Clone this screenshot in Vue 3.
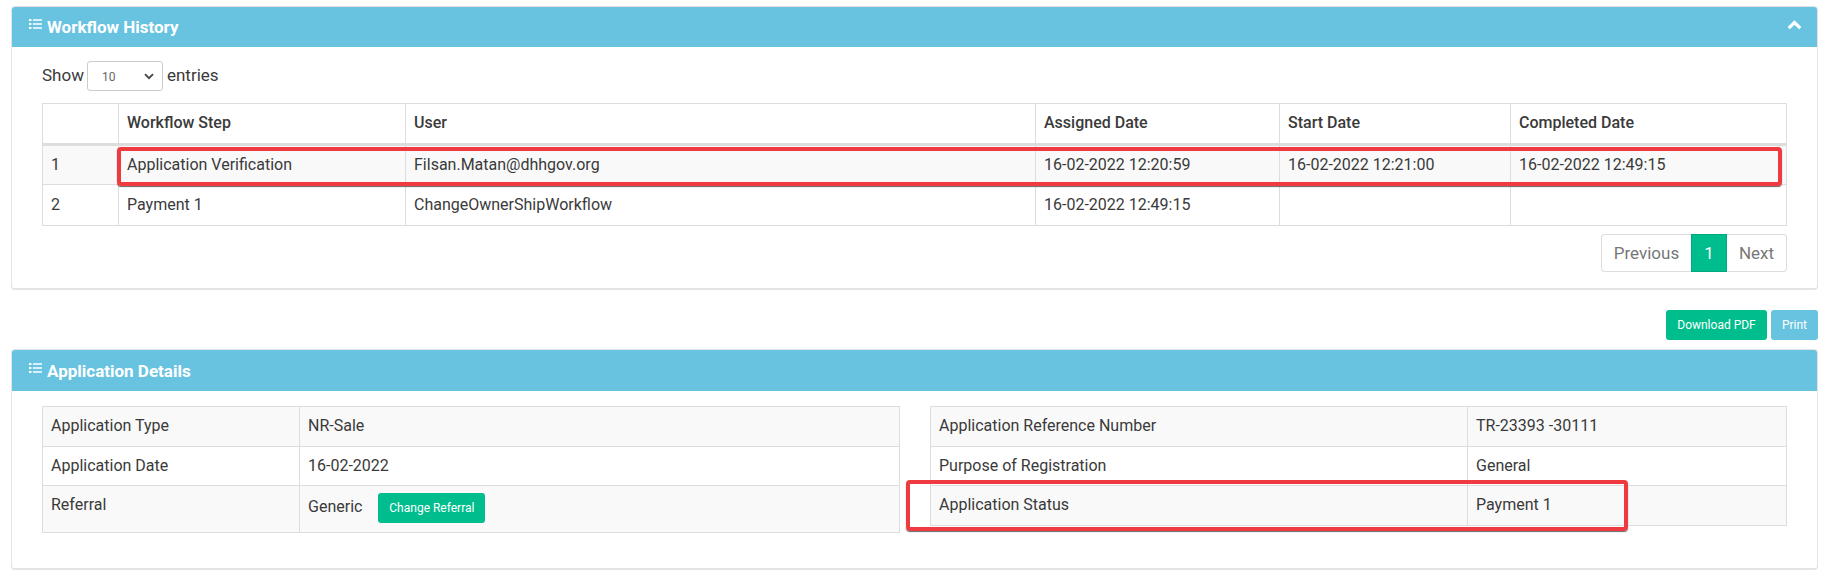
<script setup>
const history = [
  { n: '1', step: 'Application Verification', user: 'Filsan.Matan@dhhgov.org', assigned: '16-02-2022 12:20:59', start: '16-02-2022 12:21:00', done: '16-02-2022 12:49:15' },
  { n: '2', step: 'Payment 1', user: 'ChangeOwnerShipWorkflow', assigned: '16-02-2022 12:49:15', start: '', done: '' }
]
</script>

<template>
  <div class="page">
    <section class="card">
      <header class="card-head">
        <h2 class="title">
          <svg class="list-icon" viewBox="0 0 14 12" aria-hidden="true">
            <path d="M0 0.5h2.6v2.4H0zM0 4.8h2.6v2.4H0zM0 9.1h2.6v2.4H0zM4.2 0.8H14v1.8H4.2zM4.2 5.1H14v1.8H4.2zM4.2 9.4H14v1.8H4.2z" fill="#fff" />
          </svg>
          Workflow History
        </h2>
        <svg class="chevron" viewBox="0 0 14 9" aria-hidden="true">
          <path d="M1.6 7.4 7 2.2l5.4 5.2" fill="none" stroke="#fff" stroke-width="3" />
        </svg>
      </header>
      <div class="history-body">
        <div class="length">
          <span>Show</span>
          <span class="select-wrap">
            <select class="length-select">
              <option>10</option>
            </select>
            <svg class="select-arrow" viewBox="0 0 10 7" aria-hidden="true">
              <path d="M1 1.2 5 5.2l4-4" fill="none" stroke="#444" stroke-width="1.8" />
            </svg>
          </span>
          <span>entries</span>
        </div>
        <div class="table-wrap">
          <table class="grid history">
            <colgroup>
              <col class="c1" /><col class="c2" /><col class="c3" /><col class="c4" /><col class="c5" /><col />
            </colgroup>
            <thead>
              <tr>
                <th></th>
                <th>Workflow Step</th>
                <th>User</th>
                <th>Assigned Date</th>
                <th>Start Date</th>
                <th>Completed Date</th>
              </tr>
            </thead>
            <tbody>
              <tr v-for="row in history" :key="row.n">
                <td>{{ row.n }}</td>
                <td>{{ row.step }}</td>
                <td>{{ row.user }}</td>
                <td>{{ row.assigned }}</td>
                <td>{{ row.start }}</td>
                <td>{{ row.done }}</td>
              </tr>
            </tbody>
          </table>
          <div class="mark mark-history"></div>
        </div>
        <nav class="pager">
          <span class="page-btn prev">Previous</span>
          <span class="page-btn active">1</span>
          <span class="page-btn next">Next</span>
        </nav>
      </div>
    </section>

    <div class="actions">
      <button class="btn green download">Download PDF</button>
      <button class="btn blue print">Print</button>
    </div>

    <section class="card">
      <header class="card-head second">
        <h2 class="title">
          <svg class="list-icon" viewBox="0 0 14 12" aria-hidden="true">
            <path d="M0 0.5h2.6v2.4H0zM0 4.8h2.6v2.4H0zM0 9.1h2.6v2.4H0zM4.2 0.8H14v1.8H4.2zM4.2 5.1H14v1.8H4.2zM4.2 9.4H14v1.8H4.2z" fill="#fff" />
          </svg>
          Application Details
        </h2>
      </header>
      <div class="details">
        <table class="grid info left">
          <colgroup><col class="l1" /><col /></colgroup>
          <tbody>
            <tr class="r1"><td>Application Type</td><td>NR-Sale</td></tr>
            <tr class="r2"><td>Application Date</td><td>16-02-2022</td></tr>
            <tr class="r3">
              <td class="top">Referral</td>
              <td class="referral">
                <span>Generic</span>
                <button class="btn green change">Change Referral</button>
              </td>
            </tr>
          </tbody>
        </table>
        <div class="table-wrap">
          <table class="grid info right">
            <colgroup><col class="r-col" /><col /></colgroup>
            <tbody>
              <tr class="r1"><td>Application Reference Number</td><td>TR-23393 -30111</td></tr>
              <tr class="r2"><td>Purpose of Registration</td><td>General</td></tr>
              <tr class="r1"><td>Application Status</td><td>Payment 1</td></tr>
            </tbody>
          </table>
          <div class="mark mark-status"></div>
        </div>
      </div>
    </section>
  </div>
</template>

<style scoped>
.page {
  box-sizing: border-box;
  width: 1829px;
  height: 579px;
  padding: 6px 11px 0 11px;
  overflow: hidden;
  background: #fff;
  font-family: Roboto, "Liberation Sans", sans-serif;
  font-size: 16px;
  color: #3a3a3a;
}
.card {
  border: 1px solid #e4e4e4;
  border-bottom-width: 2px;
  border-radius: 4px;
  background: #fff;
}
.card-head {
  display: flex;
  align-items: center;
  justify-content: space-between;
  height: 40px;
  padding: 0 15px;
  background: #67c3e0;
  border-radius: 3px 3px 0 0;
}
.card-head.second {
  height: 41px;
}
.title {
  display: flex;
  align-items: center;
  margin: 0;
  font-size: 17px;
  line-height: 22px;
  font-weight: 700;
  color: #fff;
}
.list-icon {
  width: 13px;
  height: 12px;
  margin: -6px 5px 0 2px;
}
.chevron {
  width: 15px;
  height: 10px;
  margin: -4px 0 0 0;
}
.history-body {
  padding: 14px 30px 16px;
}
.length {
  display: flex;
  align-items: center;
  gap: 3px;
  height: 30px;
  margin-bottom: 12px;
  font-size: 17px;
  line-height: 24px;
}
.length > span:first-child,
.length > span:last-child {
  padding-bottom: 3px;
}
.select-wrap {
  position: relative;
  display: block;
  height: 30px;
  margin: 0 1px 0 0;
}
.length-select {
  box-sizing: border-box;
  display: block;
  width: 76px;
  height: 30px;
  padding: 2px 8px 0 14px;
  border: 1px solid #ccc;
  border-radius: 3px;
  background: #fff;
  appearance: none;
  font-family: inherit;
  font-size: 12px;
  color: #666;
}
.select-arrow {
  position: absolute;
  right: 9px;
  top: 12px;
  width: 10px;
  height: 7px;
  pointer-events: none;
}
.table-wrap {
  position: relative;
}
.grid {
  width: 100%;
  border-collapse: collapse;
  table-layout: fixed;
}
.grid th,
.grid td {
  box-sizing: border-box;
  padding: 0 8px 2px;
  border: 1px solid #ddd;
  text-align: left;
  white-space: nowrap;
}
.history th {
  height: 41px;
  border-bottom: 3px solid #ddd;
  font-weight: 500;
}
.history td {
  height: 40px;
}
.history tbody tr:last-child td {
  height: 41px;
}
.history tbody tr:first-child {
  background: #f9f9f9;
}
.c1 { width: 76px; }
.c2 { width: 287px; }
.c3 { width: 630px; }
.c4 { width: 244px; }
.c5 { width: 231px; }
.mark {
  position: absolute;
  box-sizing: border-box;
  border: 4px solid #ef3b3f;
  border-radius: 4px;
  box-shadow: 0 1px 1px #666;
  pointer-events: none;
}
.mark-history {
  left: 75px;
  top: 44px;
  width: 1665px;
  height: 39px;
}
.mark-status {
  left: -24px;
  top: 74px;
  width: 722px;
  height: 51px;
}
.pager {
  display: flex;
  justify-content: flex-end;
  margin-top: 8px;
  height: 38px;
  font-size: 17px;
}
.page-btn {
  box-sizing: border-box;
  display: flex;
  align-items: center;
  justify-content: center;
  height: 38px;
  border: 1px solid #ddd;
  color: #777;
}
.prev {
  width: 90px;
  border-radius: 4px 0 0 4px;
  border-right: 0;
}
.active {
  width: 36px;
  background: #00bd8d;
  border-color: #00a87d;
  color: #fff;
}
.next {
  width: 60px;
  border-left: 0;
  border-radius: 0 4px 4px 0;
}
.actions {
  display: flex;
  justify-content: flex-end;
  gap: 4px;
  margin: 20px 0 9px;
}
.btn {
  box-sizing: border-box;
  height: 30px;
  padding: 0;
  border: 0;
  border-radius: 3px;
  font-family: inherit;
  font-size: 12px;
  color: #fff;
}
.green {
  background: #00bd8d;
}
.blue {
  background: #67c3e0;
}
.download {
  width: 101px;
}
.print {
  width: 47px;
}
.details {
  display: grid;
  grid-template-columns: 858px 857px;
  column-gap: 30px;
  align-items: start;
  padding: 15px 30px 35px;
}
.info .r1 td {
  height: 40px;
  background: #f9f9f9;
}
.info .r2 td {
  height: 39px;
}
.info .r3 td {
  height: 47px;
  background: #f9f9f9;
}
.l1 {
  width: 257px;
}
.r-col {
  width: 537px;
}
.grid td.top {
  vertical-align: top;
  padding-top: 9px;
}
.referral span {
  margin-right: 16px;
}
.change {
  width: 107px;
  vertical-align: middle;
}
</style>

<style>
html, body {
  margin: 0;
  background: #fff;
}
</style>
